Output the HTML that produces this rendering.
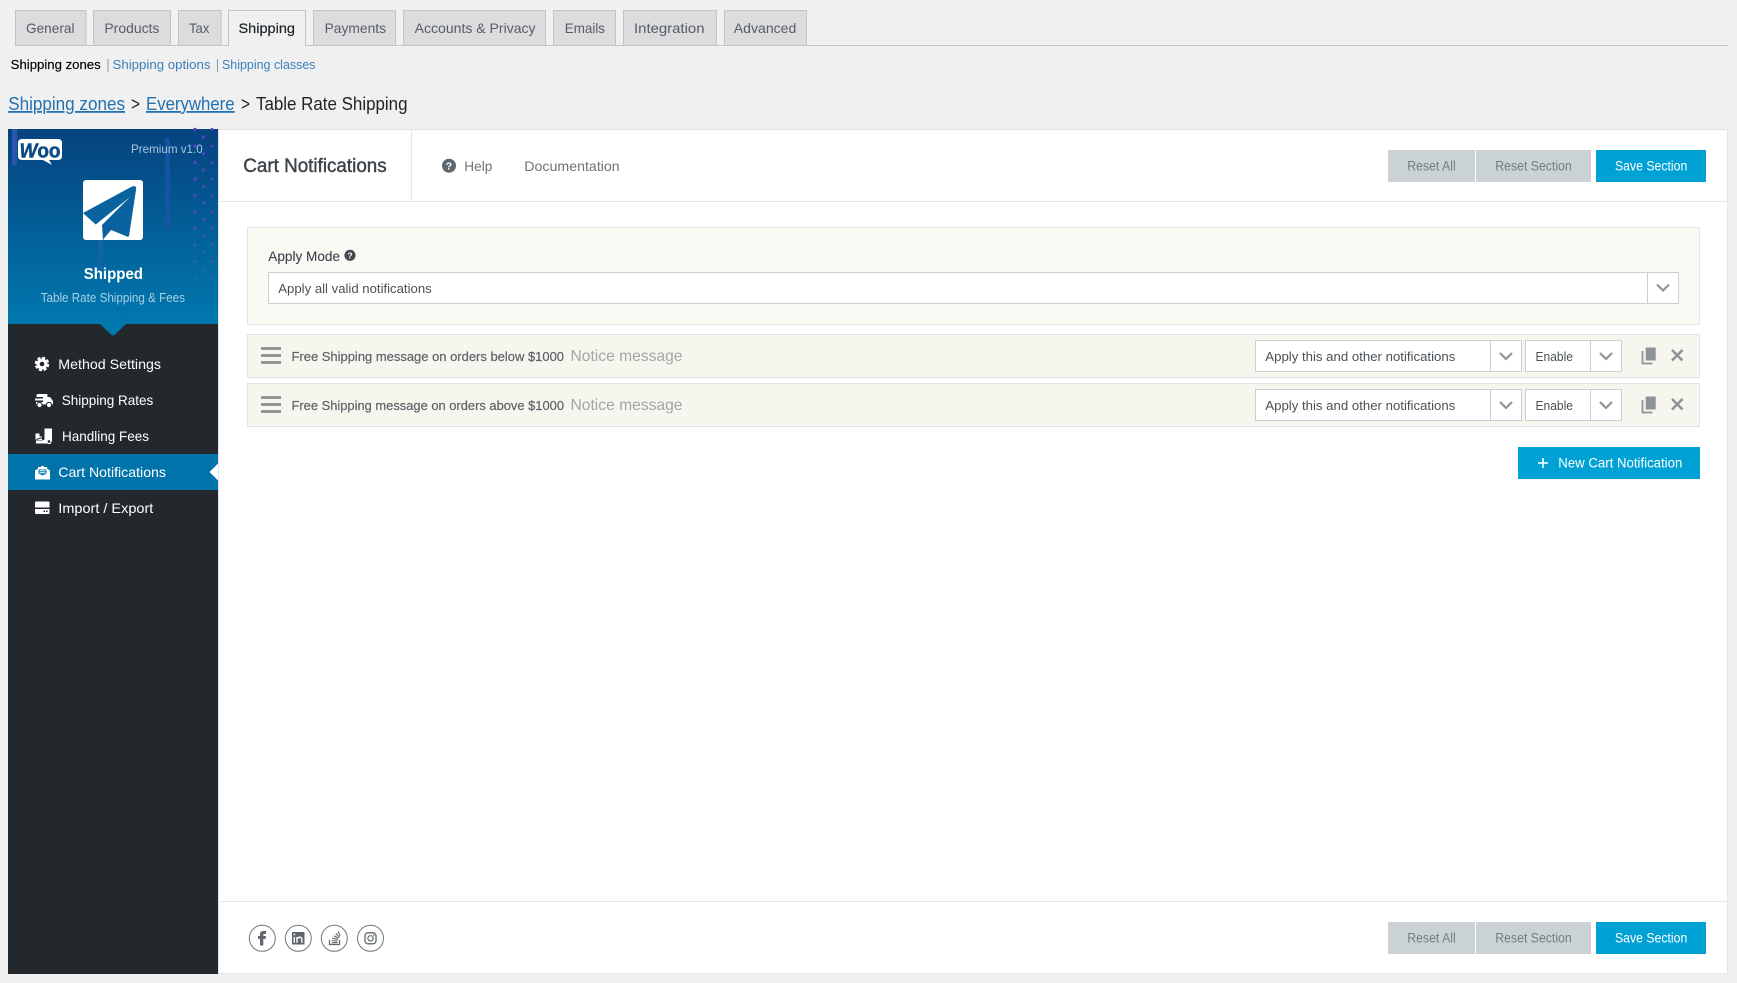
<!DOCTYPE html>
<html lang="en"><head><meta charset="utf-8"><title>Shipping settings</title>
<style>
html,body{margin:0;padding:0;width:1737px;height:983px;overflow:hidden;background:#f0f0f1}
svg{position:absolute;left:0;top:0;display:block}
text{font-family:"Liberation Sans",Arial,sans-serif;white-space:pre}
</style></head><body>
<svg width="1737" height="983" viewBox="0 0 1737 983" xmlns="http://www.w3.org/2000/svg">
<defs>
<linearGradient id="hd" x1="0" y1="129" x2="0" y2="324" gradientUnits="userSpaceOnUse"><stop offset="0" stop-color="#06437f"/><stop offset="1" stop-color="#0078ae"/></linearGradient>
<linearGradient id="dots" x1="0" y1="129" x2="0" y2="290" gradientUnits="userSpaceOnUse"><stop offset="0" stop-color="#4f3fc4"/><stop offset=".55" stop-color="#3f50b8"/><stop offset="1" stop-color="#0f72ae"/></linearGradient>
</defs>
<rect width="1737" height="983" fill="#f0f0f1"/>

<!-- tabs -->
<rect x="15" y="45" width="1713" height="1" fill="#c3c4c7"/>
<g fill="#dcdcde" stroke="#c3c4c7">
<rect x="15.500" y="10.500" width="70.500" height="35"/><rect x="93.500" y="10.500" width="77" height="35"/><rect x="178.500" y="10.500" width="42.500" height="35"/>
<rect x="313.500" y="10.500" width="82" height="35"/><rect x="403.500" y="10.500" width="142" height="35"/><rect x="553.500" y="10.500" width="62" height="35"/><rect x="623.500" y="10.500" width="93" height="35"/><rect x="724.500" y="10.500" width="82" height="35"/>
</g>
<path d="M228.500 46V10.500H305.500V46" fill="#f0f0f1" stroke="#c3c4c7"/>
<rect x="229" y="45" width="76" height="1.500" fill="#f0f0f1"/>
<g font-size="14" fill="#565d63">
<text x="26" y="33" textLength="48.500" lengthAdjust="spacingAndGlyphs">General</text>
<text x="104.400" y="33" textLength="55" lengthAdjust="spacingAndGlyphs">Products</text>
<text x="189" y="33" textLength="20.400" lengthAdjust="spacingAndGlyphs">Tax</text>
<text x="238.500" y="33" textLength="56.500" lengthAdjust="spacingAndGlyphs" fill="#1d2327" stroke="#1d2327" stroke-width=".2">Shipping</text>
<text x="324.600" y="33" textLength="61.400" lengthAdjust="spacingAndGlyphs">Payments</text>
<text x="414.600" y="33" textLength="121" lengthAdjust="spacingAndGlyphs">Accounts &amp; Privacy</text>
<text x="564.800" y="33" textLength="40.200" lengthAdjust="spacingAndGlyphs">Emails</text>
<text x="634" y="33" textLength="70.500" lengthAdjust="spacingAndGlyphs">Integration</text>
<text x="733.800" y="33" textLength="62.500" lengthAdjust="spacingAndGlyphs">Advanced</text>
</g>

<!-- sub nav -->
<g font-size="13">
<text x="10.700" y="69" textLength="90" lengthAdjust="spacingAndGlyphs" fill="#000" stroke="#000" stroke-width=".15">Shipping zones</text>
<rect x="107.500" y="59" width="1" height="13" fill="#8a9aa8"/>
<text x="112.500" y="69" textLength="98" lengthAdjust="spacingAndGlyphs" fill="#3a7fb8">Shipping options</text>
<rect x="217" y="59" width="1" height="13" fill="#8a9aa8"/>
<text x="222" y="69" textLength="93.500" lengthAdjust="spacingAndGlyphs" fill="#3a7fb8">Shipping classes</text>
</g>

<!-- breadcrumb -->
<g font-size="18">
<text x="8.200" y="110" textLength="116.800" lengthAdjust="spacingAndGlyphs" fill="#2271b1" text-decoration="underline">Shipping zones</text>
<text x="131" y="110" textLength="9" lengthAdjust="spacingAndGlyphs" fill="#1d2327">&gt;</text>
<text x="146" y="110" textLength="88.600" lengthAdjust="spacingAndGlyphs" fill="#2271b1" text-decoration="underline">Everywhere</text>
<text x="241" y="110" textLength="9" lengthAdjust="spacingAndGlyphs" fill="#1d2327">&gt;</text>
<text x="256" y="110" textLength="151.500" lengthAdjust="spacingAndGlyphs" fill="#1d2327">Table Rate Shipping</text>
</g>

<!-- main panel -->
<rect x="218.500" y="129.500" width="1509" height="844" fill="#fff" stroke="#e4e5e6"/>
<rect x="218" y="201" width="1509" height="1" fill="#e5e6e7"/>
<rect x="411" y="130" width="1" height="71" fill="#e5e6e7"/>
<rect x="218" y="901" width="1509" height="1" fill="#e5e6e7"/>

<!-- sidebar -->
<rect x="8" y="129" width="210" height="845" fill="#23282d"/>
<rect x="8" y="129" width="210" height="195" fill="url(#hd)"/>
<path d="M12 129h5v34a2.500 2.500 0 0 1-5 0z" fill="#2a55b0"/>
<rect x="165" y="138" width="5" height="92" rx="2.500" fill="#1a55a5" opacity=".8"/>
<rect x="98" y="240" width="5" height="32" rx="2" fill="#1a62ad" opacity=".7"/>
<g fill="none" stroke="url(#dots)" stroke-width="3.400" stroke-linecap="round" stroke-dasharray="0 16.500">
<line x1="195" y1="129.500" x2="195" y2="285"/><line x1="212" y1="129.500" x2="212" y2="285" stroke-width="3"/><line x1="203.500" y1="137" x2="203.500" y2="285"/>
</g>
<path d="M100 324H126L115 334.500Q113 336.500 111 334.500Z" fill="#0078ae"/>

<!-- woo logo -->
<path d="M22 139H58Q62 139 62 143V156Q62 160 58 160H49L52 165L43 160H22Q18 160 18 156V143Q18 139 22 139Z" fill="#fff"/>
<text x="19.500" y="157.500" font-size="20" font-weight="700" fill="#0a4a86" stroke="#0a4a86" stroke-width=".5" textLength="41" lengthAdjust="spacingAndGlyphs"><tspan font-style="italic">W</tspan>oo</text>

<text x="131" y="153" font-size="12" fill="#a9c8e0" textLength="71.700" lengthAdjust="spacingAndGlyphs">Premium v1.0</text>

<rect x="83" y="180" width="60" height="60" rx="3" fill="#fff"/>
<path d="M83 213L132 186.500Q137 185 136 190L129 236Q128.500 237 127 236.500L111 230L103.500 239Q104 240 103 240L102 225L130 197L95.700 224.500Z" fill="#0a629f"/>

<text x="83.700" y="279" font-size="16" font-weight="700" fill="#fff" textLength="59.300" lengthAdjust="spacingAndGlyphs">Shipped</text>
<text x="40.700" y="302" font-size="12.500" fill="#a8d0e4" textLength="144.300" lengthAdjust="spacingAndGlyphs">Table Rate Shipping &amp; Fees</text>

<rect x="8" y="454" width="210" height="36" fill="#0073aa"/>
<path d="M218 463.500L209.500 472L218 480.500Z" fill="#fff"/>

<g font-size="14" fill="#fff">
<text x="58.300" y="369" textLength="102.700" lengthAdjust="spacingAndGlyphs">Method Settings</text>
<text x="61.700" y="405" textLength="91.600" lengthAdjust="spacingAndGlyphs">Shipping Rates</text>
<text x="62" y="441" textLength="87" lengthAdjust="spacingAndGlyphs">Handling Fees</text>
<text x="58.300" y="477" textLength="107.700" lengthAdjust="spacingAndGlyphs">Cart Notifications</text>
<text x="58.300" y="513" textLength="95" lengthAdjust="spacingAndGlyphs">Import / Export</text>
</g>

<!-- gear -->
<circle cx="42" cy="364" r="5.500" fill="#fff"/>
<circle cx="42" cy="364" r="6" fill="none" stroke="#fff" stroke-width="2.600" stroke-dasharray="3 1.710"/>
<circle cx="42" cy="364" r="2.300" fill="#23282d"/>
<!-- truck -->
<path d="M38 394H46.500Q47.500 394 47.500 395V397H50L53 401V404.500H36V402H43V400.500H35V398.500H43V397H36.500V395.500Q36.500 394 38 394Z" fill="#fff"/>
<circle cx="39.500" cy="405" r="2.600" fill="#fff" stroke="#23282d"/><circle cx="49" cy="405" r="2.600" fill="#fff" stroke="#23282d"/>
<!-- dolly -->
<path d="M44.500 428.500H52V441L47 441 47 443.500H36V440.500H42L44.500 439.500Z" fill="#fff"/>
<path d="M35.500 433.500H39.500V436.500H42V440H35.500Z" fill="#fff"/>
<path d="M36 439.500L43 437.500" stroke="#23282d" stroke-width="1"/>
<circle cx="49" cy="441.500" r="2" fill="#23282d" stroke="#fff" stroke-width="1.300"/>
<!-- envelope -->
<path d="M35 470.500L38 468.500V467H40.500L42.500 465.500L44.500 467H47V468.500L50 470.500V479.500H35Z" fill="#fff"/>
<path d="M38.500 469.500H46.500V473.500L42.500 475.500L38.500 473.500Z" fill="#0073aa"/>
<path d="M39.500 470.700H45.500M39.500 472.800H45.500" stroke="#fff" stroke-width="1"/>
<!-- hdd -->
<rect x="35" y="501.500" width="14.500" height="12.500" rx="1" fill="#fff"/>
<rect x="35" y="507.500" width="14.500" height="1.500" fill="#23282d"/>
<rect x="43.500" y="510.500" width="1.500" height="1.500" fill="#23282d"/><rect x="46" y="510.500" width="1.500" height="1.500" fill="#23282d"/>

<!-- header -->
<text x="243.300" y="172" font-size="19" fill="#3b4347" stroke="#3b4347" stroke-width=".4" textLength="143.400" lengthAdjust="spacingAndGlyphs">Cart Notifications</text>
<circle cx="449" cy="165.700" r="7" fill="#5f676c"/>
<text x="449" y="169.700" font-size="10.500" font-weight="700" fill="#fff" text-anchor="middle">?</text>
<text x="464.300" y="171" font-size="14" fill="#6b7378" textLength="28" lengthAdjust="spacingAndGlyphs">Help</text>
<text x="524.300" y="171" font-size="14" fill="#6b7378" textLength="95.400" lengthAdjust="spacingAndGlyphs">Documentation</text>

<!-- buttons top -->
<rect x="1388" y="150" width="87" height="32" fill="#cad2d5"/>
<rect x="1476" y="150" width="115" height="32" fill="#cad2d5"/>
<rect x="1596" y="150" width="110" height="32" fill="#00a2d6"/>
<g font-size="13.500">
<text x="1407.300" y="170.700" fill="#757d82" textLength="48.400" lengthAdjust="spacingAndGlyphs">Reset All</text>
<text x="1495.300" y="170.700" fill="#757d82" textLength="76.400" lengthAdjust="spacingAndGlyphs">Reset Section</text>
<text x="1615" y="170.700" fill="#fff" textLength="72.300" lengthAdjust="spacingAndGlyphs">Save Section</text>
</g>
<!-- buttons bottom -->
<rect x="1388" y="922" width="87" height="32" fill="#cad2d5"/>
<rect x="1476" y="922" width="115" height="32" fill="#cad2d5"/>
<rect x="1596" y="922" width="110" height="32" fill="#00a2d6"/>
<g font-size="13.500">
<text x="1407.300" y="942.700" fill="#757d82" textLength="48.400" lengthAdjust="spacingAndGlyphs">Reset All</text>
<text x="1495.300" y="942.700" fill="#757d82" textLength="76.400" lengthAdjust="spacingAndGlyphs">Reset Section</text>
<text x="1615" y="942.700" fill="#fff" textLength="72.300" lengthAdjust="spacingAndGlyphs">Save Section</text>
</g>

<!-- apply mode -->
<rect x="247.500" y="227.500" width="1452" height="97" fill="#f9f9f4" stroke="#e2e4e4"/>
<text x="268.300" y="261" font-size="13.500" fill="#3c434a" stroke="#3c434a" stroke-width=".1" textLength="71.700" lengthAdjust="spacingAndGlyphs">Apply Mode</text>
<circle cx="350" cy="255.300" r="5.600" fill="#444b50"/>
<text x="350" y="258.600" font-size="8.500" font-weight="700" fill="#fff" text-anchor="middle">?</text>
<rect x="268.500" y="272.500" width="1410" height="31" fill="#fff" stroke="#c9cfd3"/>
<rect x="1647" y="273" width="1" height="30" fill="#c9cfd3"/>
<text x="278.300" y="293" font-size="13" fill="#4a5156" textLength="153.400" lengthAdjust="spacingAndGlyphs">Apply all valid notifications</text>
<path d="M1657 284.500L1663 290.500L1669 284.500" fill="none" stroke="#8f9599" stroke-width="2.200"/>

<!-- row 1 -->
<rect x="247.500" y="334.500" width="1452" height="43" fill="#f6f6ee" stroke="#e2e4e4"/>
<path d="M261 348.500H281M261 355.500H281M261 362.500H281" stroke="#8a8f93" stroke-width="2.800"/>
<text x="291.500" y="361" font-size="13" fill="#5d6469" stroke="#5d6469" stroke-width=".2" textLength="272.500" lengthAdjust="spacingAndGlyphs">Free Shipping message on orders below $1000</text>
<text x="570.500" y="361" font-size="16" fill="#a3a5a6" textLength="112" lengthAdjust="spacingAndGlyphs">Notice message</text>
<rect x="1255.500" y="340.500" width="266" height="31" fill="#fff" stroke="#c9cfd3"/><rect x="1490" y="341" width="1" height="30" fill="#c9cfd3"/>
<rect x="1525.500" y="340.500" width="96" height="31" fill="#fff" stroke="#c9cfd3"/><rect x="1590" y="341" width="1" height="30" fill="#c9cfd3"/>
<text x="1265.300" y="361" font-size="13" fill="#4a5156" textLength="190" lengthAdjust="spacingAndGlyphs">Apply this and other notifications</text>
<text x="1535.500" y="361" font-size="13" fill="#4a5156" textLength="37.500" lengthAdjust="spacingAndGlyphs">Enable</text>
<path d="M1500 353L1506 359L1512 353M1600 353L1606 359L1612 353" fill="none" stroke="#8f9599" stroke-width="2.200"/>
<path d="M1645.700 347.500H1655.700V360.500H1645.700Z" fill="#8c9296"/><path d="M1642.500 351V363.500H1652.500" fill="none" stroke="#8c9296" stroke-width="1.800"/>
<path d="M1672 350L1682.500 360.500M1682.500 350L1672 360.500" stroke="#8c9296" stroke-width="2.500"/>

<!-- row 2 -->
<rect x="247.500" y="383.500" width="1452" height="43" fill="#f6f6ee" stroke="#e2e4e4"/>
<path d="M261 397.500H281M261 404.500H281M261 411.500H281" stroke="#8a8f93" stroke-width="2.800"/>
<text x="291.500" y="410" font-size="13" fill="#5d6469" stroke="#5d6469" stroke-width=".2" textLength="272.500" lengthAdjust="spacingAndGlyphs">Free Shipping message on orders above $1000</text>
<text x="570.500" y="410" font-size="16" fill="#a3a5a6" textLength="112" lengthAdjust="spacingAndGlyphs">Notice message</text>
<rect x="1255.500" y="389.500" width="266" height="31" fill="#fff" stroke="#c9cfd3"/><rect x="1490" y="390" width="1" height="30" fill="#c9cfd3"/>
<rect x="1525.500" y="389.500" width="96" height="31" fill="#fff" stroke="#c9cfd3"/><rect x="1590" y="390" width="1" height="30" fill="#c9cfd3"/>
<text x="1265.300" y="410" font-size="13" fill="#4a5156" textLength="190" lengthAdjust="spacingAndGlyphs">Apply this and other notifications</text>
<text x="1535.500" y="410" font-size="13" fill="#4a5156" textLength="37.500" lengthAdjust="spacingAndGlyphs">Enable</text>
<path d="M1500 402L1506 408L1512 402M1600 402L1606 408L1612 402" fill="none" stroke="#8f9599" stroke-width="2.200"/>
<path d="M1645.700 396.500H1655.700V409.500H1645.700Z" fill="#8c9296"/><path d="M1642.500 400V412.500H1652.500" fill="none" stroke="#8c9296" stroke-width="1.800"/>
<path d="M1672 399L1682.500 409.500M1682.500 399L1672 409.500" stroke="#8c9296" stroke-width="2.500"/>

<!-- new -->
<rect x="1518" y="447" width="182" height="32" fill="#00a2d6"/>
<path d="M1538 463H1548M1543 458V468" stroke="#fff" stroke-width="1.600"/>
<text x="1558.300" y="467.700" font-size="13.500" fill="#fff" textLength="124" lengthAdjust="spacingAndGlyphs">New Cart Notification</text>

<!-- social -->
<g fill="none" stroke="#70787d" stroke-width="1">
<circle cx="262.300" cy="938.300" r="13"/><circle cx="298.300" cy="938.300" r="13"/><circle cx="334.300" cy="938.300" r="13"/><circle cx="370.500" cy="938.300" r="13"/>
</g>
<path d="M260 945.500V939H258V936H260V934Q260 931 263.500 931H266V934H264Q263.300 934 263.300 935V936H266L265.500 939H263.300V945.500Z" fill="#5f676c"/>
<rect x="292" y="932" width="12.500" height="12.500" fill="#5f676c"/>
<path d="M294.300 937V942.800M297 942.800V937M297 939Q299.800 935.500 301.800 938.500V942.800" fill="none" stroke="#fff" stroke-width="1.400"/><rect x="293.600" y="933.700" width="1.500" height="1.500" fill="#fff"/>
<path d="M329.500 940V944.500H339.500V940" fill="none" stroke="#5f676c" stroke-width="1.200"/>
<path d="M331.500 942.700H337.500M331.700 940.500L337.500 941.200M332.300 938.200L338 939.500M333.700 935.800L338.600 938.300M335.800 933.500L339.500 937.300M338 931.500L340.200 935.800" stroke="#5f676c" stroke-width="1.100" fill="none"/>
<rect x="365" y="932.800" width="11" height="11" rx="3" fill="none" stroke="#5f676c" stroke-width="1.300"/>
<circle cx="370.500" cy="938.300" r="2.600" fill="none" stroke="#5f676c" stroke-width="1.200"/>
<circle cx="373.700" cy="935.100" r=".8" fill="#5f676c"/>
</svg>
</body></html>
